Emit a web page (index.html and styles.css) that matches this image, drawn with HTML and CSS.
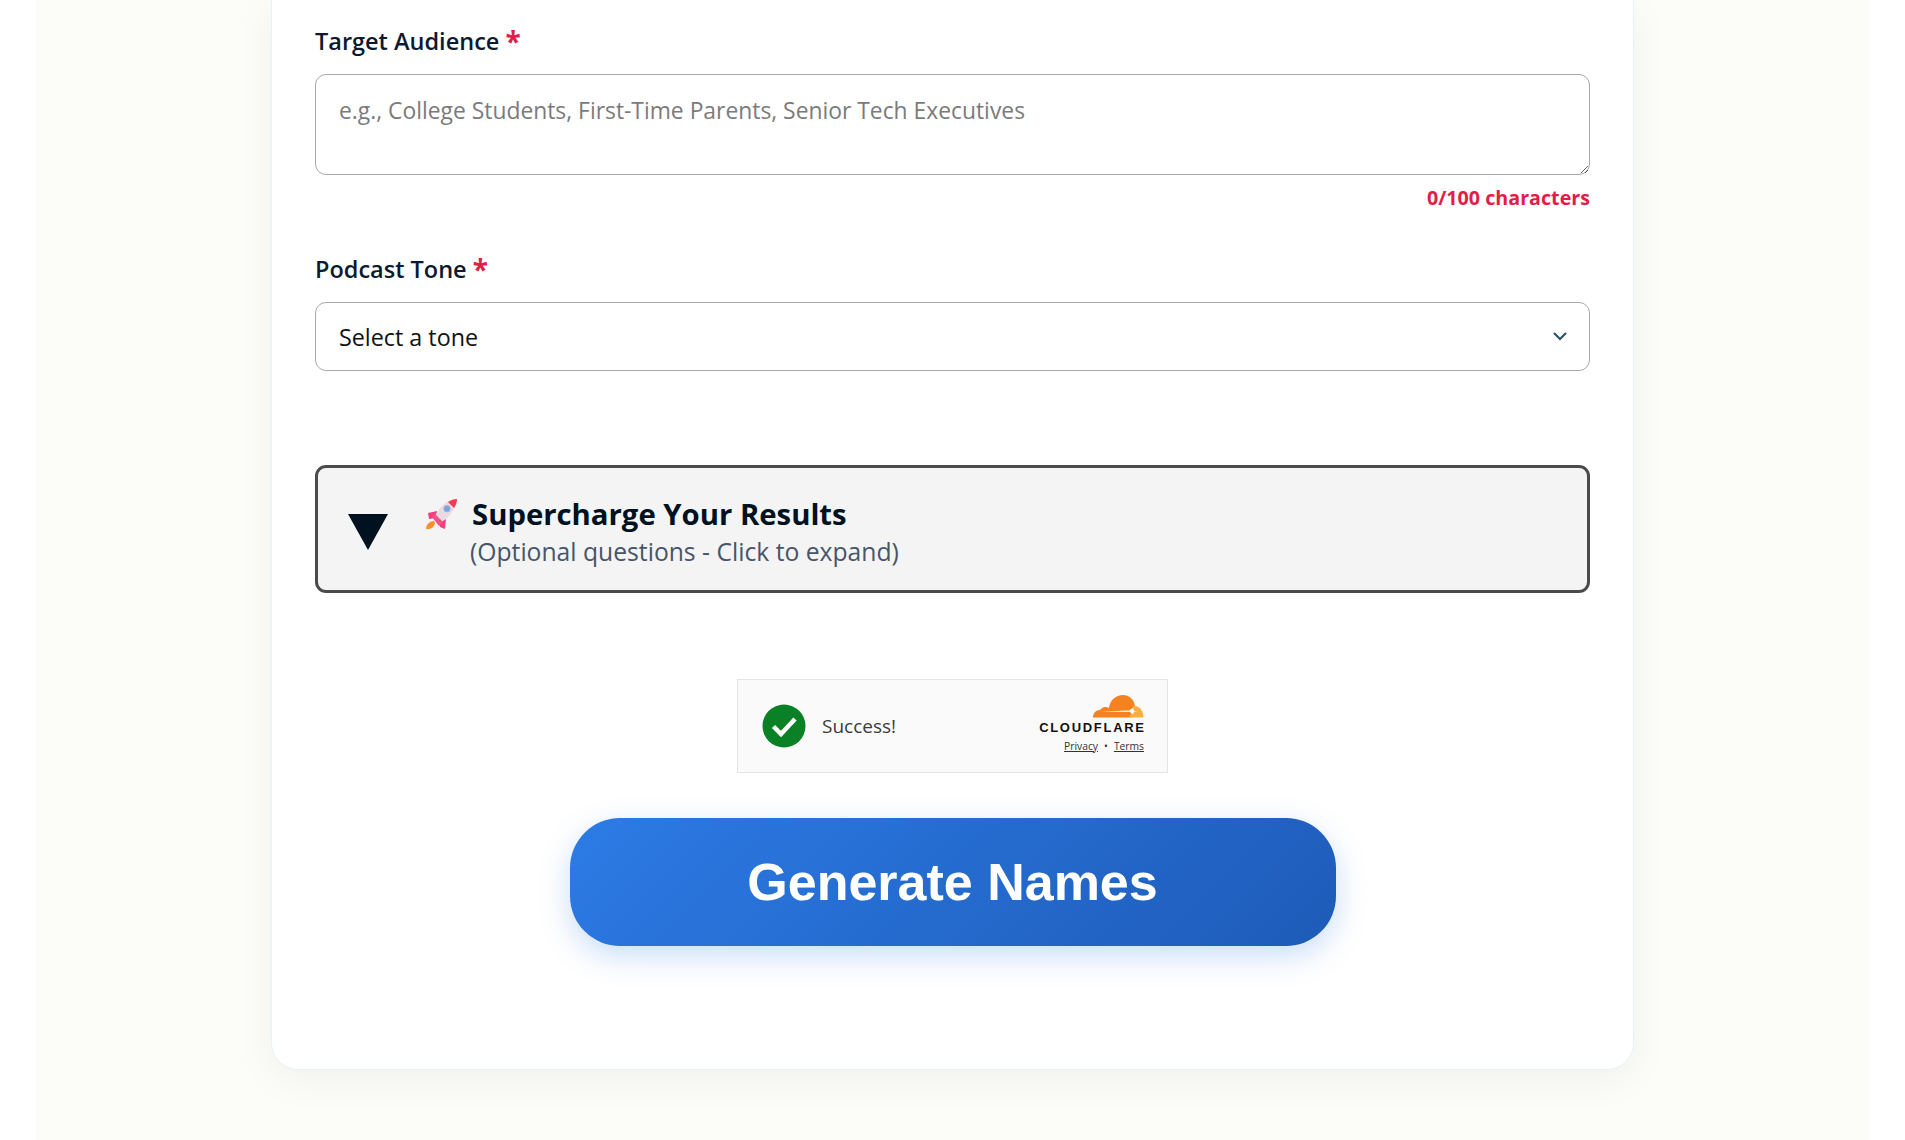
FILE: index.html
```html
<!DOCTYPE html>
<html lang="en">
<head>
<meta charset="utf-8">
<title>Podcast Name Generator</title>
<link rel="stylesheet" href="styles.css">
</head>
<body>
<div class="page">
  <main class="card">
    <form class="form">
      <div class="field">
        <label class="label" for="aud">Target Audience <span class="req">*</span></label>
        <textarea class="textarea" id="aud" placeholder="e.g., College Students, First-Time Parents, Senior Tech Executives"></textarea>
        <div class="count">0/100 characters</div>
      </div>
      <div class="field tone">
        <label class="label" for="tone">Podcast Tone <span class="req">*</span></label>
        <select class="select" id="tone"><option>Select a tone</option></select>
      </div>
      <div class="panel">
        <svg class="caret" viewBox="0 0 40 36" width="40" height="36"><path d="M0 0H40L20 36Z" fill="#00111f"/></svg>
        <svg class="rocket" viewBox="0 0 32 32" width="32" height="32">
          <path d="M8 23C4 23 0 26 0 31 5 32 9 28 9 25z" fill="#f7902f"/>
          <path d="M11 13L2 15 3 21 10 20z" fill="#f43f7f"/>
          <path d="M20 21L19 31 14 29 13 24z" fill="#f43f7f"/>
          <path d="M30 1C20 2 11 11 8 21L12 25C22 22 30 12 30 1z" fill="#e8dbe4"/>
          <path d="M6 19L9 16 17 24 13 28z" fill="#f4508a"/>
          <path d="M31 1C28 1 25 2 22 4L28 10C30 7 31 4 31 1z" fill="#f43a52"/>
          <circle cx="21" cy="10.700" r="3.200" fill="#6ea6e8" stroke="#b9a9c6"/>
        </svg>
        <div class="panel-text">
          <div class="panel-title">Supercharge Your Results</div>
          <div class="panel-sub">(Optional questions - Click to expand)</div>
        </div>
      </div>
      <div class="turnstile">
        <svg class="check" viewBox="0 0 44 44" width="44" height="44">
          <circle cx="22" cy="22" r="21.500" fill="#0a8125"/>
          <path d="M11.500 22.500l7.500 7.500 14-15" fill="none" stroke="#fff" stroke-width="4.500"/>
        </svg>
        <span class="success">Success!</span>
        <div class="cf">
          <svg class="cloud" viewBox="0 0 52 24" width="52" height="24">
            <path d="M1 23.500C1 19 4 16 8 16 9 14.500 11 13 13 13 14.500 13 16 13.500 17 14 18 6 24 1 31 1 37 1 42 5 43 12L39 23.500z" fill="#f6821f"/>
            <path d="M37 23.500C40 19 41 15 41 12H43C47.500 12 51.500 17 51.500 23.500z" fill="#fbad41"/>
            <path d="M8 17.500L37 16.600 41 14 42 16.800 45 17.200 42 17.800 41 20.500 38 18z" fill="#fff"/>
          </svg>
          <div class="cf-name">CLOUDFLARE</div>
          <div class="cf-links"><a class="cf-link">Privacy</a><span>•</span><a class="cf-link">Terms</a></div>
        </div>
      </div>
      <button class="generate" type="button">Generate Names</button>
    </form>
  </main>
</div>
</body>
</html>
```
FILE: styles.css
```css
* { box-sizing: border-box; }
html, body { margin: 0; height: 1140px; overflow: hidden; background: #fff; }
body { font-family: "Open Sans", "Noto Sans", sans-serif; color: #0f172a; }
.page { margin: 0 36px; height: 1140px; background: #fcfdf9; }
.card {
  width: 1363px; height: 1070px; margin-left: 235px; padding: 0 43px;
  background: #fff; border: 1px solid #eaf0fb; border-top: 0;
  border-radius: 0 0 27px 27px;
  box-shadow: 0 10px 40px rgba(0, 0, 0, .05);
}
.form { display: flex; flex-direction: column; padding-top: 24px; }
.field { display: flex; flex-direction: column; }
.label { font-size: 23.500px; font-weight: 600; line-height: 35px; color: #0b1a30; margin-bottom: 15px; height: 35px; }
.req { color: #e11d48; font-size: 28px; font-weight: 700; line-height: 0; vertical-align: -2px; }
.textarea {
  display: block; width: 100%; height: 101px; padding: 19px 23px; resize: vertical;
  font: 400 22.850px/1.5 "Open Sans", "Noto Sans", sans-serif; color: #111;
  border: 1.500px solid #a9a9a9; border-radius: 11px; background: #fff; outline: 0;
}
.textarea::placeholder { color: #7b7b7b; opacity: 1; }
.count { text-align: right; font-size: 19.700px; font-weight: 700; line-height: 28px; color: #e11d48; margin-top: 9px; }
.tone { margin-top: 40px; }
.select {
  appearance: none; width: 100%; height: 69px; padding: 0 23px;
  font: 400 23.300px "Open Sans", "Noto Sans", sans-serif; color: #111;
  border: 1.500px solid #a9a9a9; border-radius: 11px; outline: 0;
  background: #fff url("data:image/svg+xml,%3Csvg xmlns='http://www.w3.org/2000/svg' viewBox='0 0 14 9'%3E%3Cpath d='M1 1l6 6 6-6' fill='none' stroke='%23264f63' stroke-width='2'/%3E%3C/svg%3E") no-repeat right 22px center / 14px 9px;
}
.panel {
  display: flex; align-items: flex-start; height: 128px; margin-top: 94px;
  padding: 30px 0 0 30px; background: #f4f4f4;
  border: 3px solid #4b4b4b; border-radius: 11px;
}
.caret { flex: none; margin-top: 16px; }
.rocket { flex: none; margin: 0 14px 0 38px; }
.panel-title { font-size: 29.300px; font-weight: 700; line-height: 39px; color: #00111f; margin-top: -3px; }
.panel-sub { font-size: 24.700px; line-height: 36px; color: #475569; margin-left: -2px; }
.turnstile {
  display: flex; align-items: center; align-self: center; width: 431px; height: 94px;
  margin-top: 86px; padding: 0 23px 0 24px; background: #fafafa; border: 1px solid #e4e4e4;
}
.check { flex: none; }
.success { font-size: 19px; color: #3c3c3c; margin-left: 16px; }
.cf { margin-left: auto; display: flex; flex-direction: column; align-items: flex-end; margin-top: -5px; }
.cloud { display: block; }
.cf-name { font: 700 13px/14px "Liberation Sans", sans-serif; letter-spacing: 1.700px; color: #111; margin-top: 3px; margin-right: -1.700px; }
.cf-links { display: flex; gap: 6px; font-size: 10.300px; line-height: 16px; color: #333; margin-top: 3px; }
.cf-link { text-decoration: underline; }
.generate {
  align-self: center; width: 766px; height: 128px; margin-top: 45px;
  border: 0; border-radius: 50px; color: #fff;
  font: 700 52px "Liberation Sans", Arial, sans-serif;
  background: linear-gradient(135deg, #2c7be5, #1e5bb8);
  box-shadow: 0 10px 30px rgba(44, 123, 229, .25);
}
```
